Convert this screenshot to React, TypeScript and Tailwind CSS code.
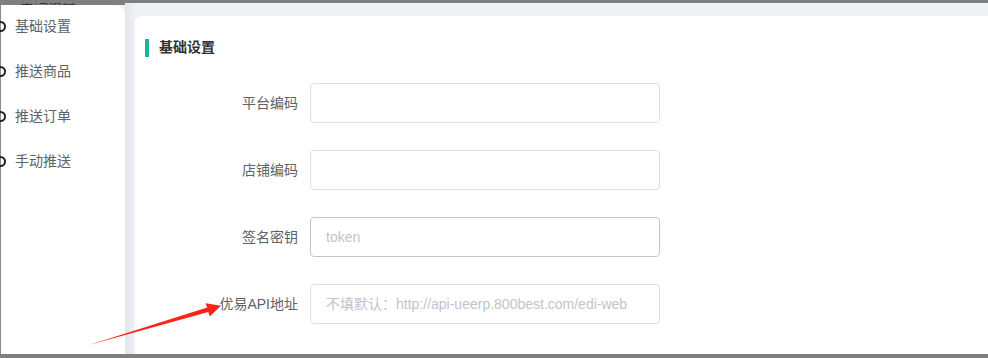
import React from "react";

const font = { fontFamily: '"Liberation Sans", "Noto Sans CJK SC", sans-serif' };

const menu = ["基础设置", "推送商品", "推送订单", "手动推送"];

const rows: { label: string; placeholder: string; hover?: boolean }[] = [
  { label: "平台编码", placeholder: "" },
  { label: "店铺编码", placeholder: "" },
  { label: "签名密钥", placeholder: "token", hover: true },
  { label: "优易API地址", placeholder: "不填默认：http://api-ueerp.800best.com/edi-web" },
];

export default function App() {
  return (
    <div
      className="relative w-[988px] h-[358px] overflow-hidden bg-[#eff2f5] flex flex-col"
      style={font}
    >
      <div className="h-[3px] bg-[#7f7f7f] shrink-0" />
      <div className="flex flex-1 min-h-0">
        <div className="w-[125px] flex flex-col shrink-0">
          <div className="h-[2px] bg-[#7f7f7f] overflow-hidden relative shrink-0">
            <div className="absolute left-[20px] top-[-13px] text-[14px] leading-[16px] text-[#333]">基础设置</div>
          </div>
          <div className="flex-1 bg-white rounded-tr-[10px] border-l border-[#8a8a8a]">
            <div className="mt-[-1px]">
              {menu.map((m) => (
                <div key={m} className="flex items-center h-[45px]">
                  <div className="ml-[-6px] w-[11px] h-[11px] rounded-full border-2 border-[#222]" />
                  <span className="ml-[9px] text-[14px] text-[#606266]">{m}</span>
                </div>
              ))}
            </div>
          </div>
        </div>
        <div className="w-[10px] shrink-0 bg-gradient-to-r from-[#e2e5e9] to-[#eff2f5]" />
        <div className="flex-1 pt-[13px] min-w-0">
          <div className="bg-white rounded-tl-[6px] h-full w-[900px]">
            <div className="pt-[21px] pl-[10px] flex items-center">
              <div className="w-[4px] h-[18px] bg-[#1fb594]" />
              <span className="ml-[10px] text-[14px] font-bold text-[#303133]">基础设置</span>
            </div>
            <div className="mt-[25px] flex flex-col gap-[27px]">
              {rows.map((r) => (
                <div key={r.label} className="flex items-center">
                  <div className="w-[175px] pr-[12px] text-right text-[14px] text-[#606266] whitespace-nowrap">
                    {r.label}
                  </div>
                  <div
                    className={`w-[350px] h-[40px] rounded-[4px] border flex items-center px-[15px] text-[14px] text-[#c0c4cc] whitespace-nowrap ${
                      r.hover ? "border-[#c0c4cc]" : "border-[#dcdfe6]"
                    }`}
                  >
                    {r.placeholder}
                  </div>
                </div>
              ))}
            </div>
          </div>
        </div>
      </div>
      <div className="h-[4px] bg-[#7f7f7f] shrink-0" />
      <svg
        className="absolute left-0 top-0 pointer-events-none"
        width="988"
        height="358"
        viewBox="0 0 988 358"
      >
        <polygon
          points="89,345 207.2,307.6 205.5,303.2 221,305.8 209.8,316.5 208.3,312"
          fill="#ff2418"
        />
      </svg>
    </div>
  );
}
